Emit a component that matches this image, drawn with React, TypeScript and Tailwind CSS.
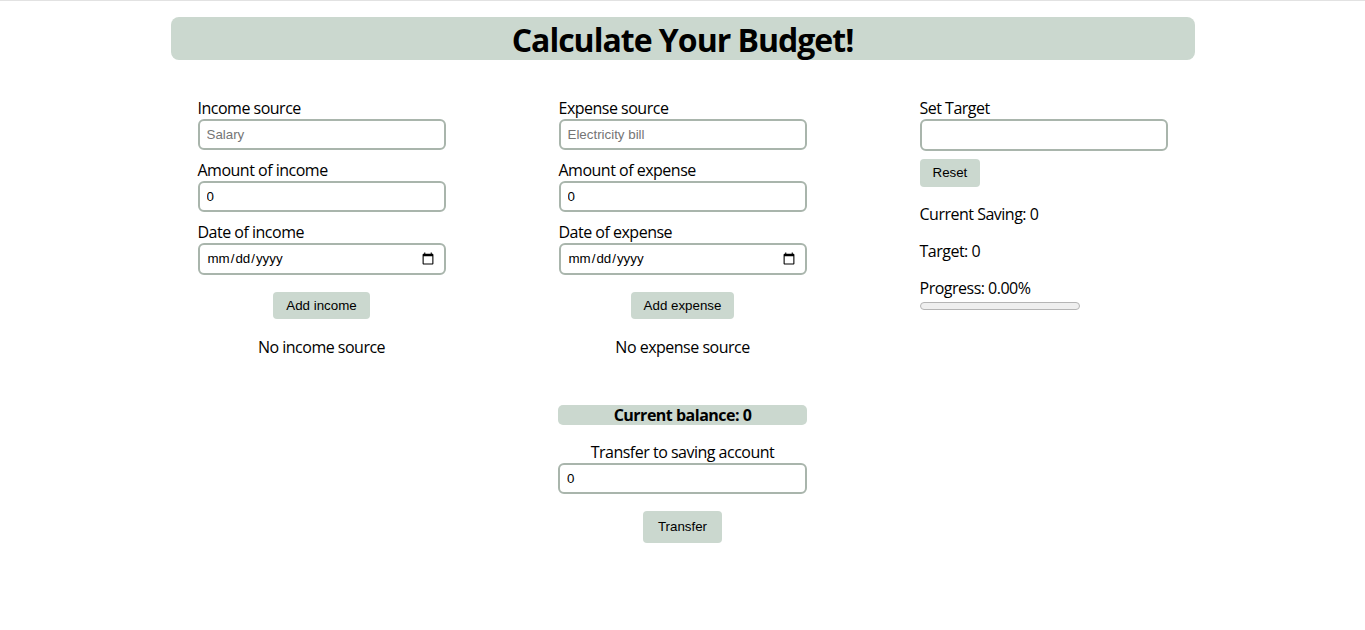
import React, { useState } from 'react';

const inputCls =
  'block w-[248px] h-[31px] rounded-[6px] border-2 border-[#a9b5ac] bg-white px-[7px] text-[13.33px] text-black placeholder:text-[#757575] outline-none tracking-normal';
const btnCls =
  'rounded-[4px] bg-[#cbd8cf] px-[13px] text-[13.33px] text-black tracking-normal';
const font = { fontFamily: '"Open Sans", sans-serif' };
const arial = '[font-family:"Liberation_Sans",Arial,sans-serif]';

function Field({ label, children }: { label: string; children: React.ReactNode }) {
  return (
    <div className="mb-[9px]">
      <label className="block text-[16px] leading-[22px]">{label}</label>
      {children}
    </div>
  );
}

function EntryColumn({ kind, placeholder }: { kind: string; placeholder: string }) {
  const [source, setSource] = useState('');
  const [amount, setAmount] = useState('0');
  return (
    <div className="w-[361px] flex justify-center">
      <div className="w-[248px]">
        <Field label={`${kind[0].toUpperCase() + kind.slice(1)} source`}>
          <input
            className={`${inputCls} ${arial}`}
            placeholder={placeholder}
            value={source}
            onChange={(e) => setSource(e.target.value)}
          />
        </Field>
        <Field label={`Amount of ${kind}`}>
          <input
            className={`${inputCls} ${arial}`}
            type="number"
            value={amount}
            onChange={(e) => setAmount(e.target.value)}
          />
        </Field>
        <Field label={`Date of ${kind}`}>
          <input className={`${inputCls} ${arial} h-[32px]`} type="date" />
        </Field>
        <div className="flex justify-center mt-[17px]">
          <button className={`${btnCls} ${arial} h-[27px]`}>Add {kind}</button>
        </div>
        <p className="mt-[17px] text-center text-[16px] leading-[22px]">No {kind} source</p>
      </div>
    </div>
  );
}

export default function App() {
  const [target, setTarget] = useState('');
  const [transfer, setTransfer] = useState('0');

  return (
    <div className="min-h-screen bg-white border-t border-[#e2e2e2] text-black tracking-[-0.5px]" style={font}>
      <div className="pt-[16px] flex justify-center">
        <h1 className="w-[1024px] h-[43px] rounded-[8px] bg-[#cbd8cf] text-center text-[32px] font-bold leading-[45px] tracking-[-1px]">
          Calculate Your Budget!
        </h1>
      </div>

      <div className="mt-[37px] flex justify-center">
        <EntryColumn kind="income" placeholder="Salary" />

        <div className="w-[361px] flex flex-col items-center">
          <EntryColumn kind="expense" placeholder="Electricity bill" />
          <div className="w-[249px] mt-[47px]">
            <div className="h-[20px] rounded-[5px] bg-[#cbd8cf] text-center text-[16px] font-bold leading-[20px]">
              Current balance: 0
            </div>
            <p className="mt-[17px] text-center text-[16px] leading-[21px]">Transfer to saving account</p>
            <input
              className={`${inputCls} ${arial} w-[249px]`}
              type="number"
              value={transfer}
              onChange={(e) => setTransfer(e.target.value)}
            />
            <div className="flex justify-center mt-[17px]">
              <button className={`${btnCls} ${arial} h-[32px] px-[15px]`}>Transfer</button>
            </div>
          </div>
        </div>

        <div className="w-[361px] flex justify-center">
          <div className="w-[248px]">
            <label className="block text-[16px] leading-[22px]">Set Target</label>
            <input
              className={`${inputCls} ${arial} h-[32px]`}
              type="number"
              value={target}
              onChange={(e) => setTarget(e.target.value)}
            />
            <button className={`${btnCls} ${arial} mt-[8px] h-[28px] px-[13px]`}>Reset</button>
            <p className="mt-[16px] text-[16px] leading-[22px]">Current Saving: 0</p>
            <p className="mt-[15px] text-[16px] leading-[22px]">Target: 0</p>
            <p className="mt-[15px] text-[16px] leading-[22px]">Progress: 0.00%</p>
            <div className="mt-[3px] w-[160px] h-[8px] rounded-full border border-[#b5b5b5] bg-[#efefef]" />
          </div>
        </div>
      </div>
    </div>
  );
}
